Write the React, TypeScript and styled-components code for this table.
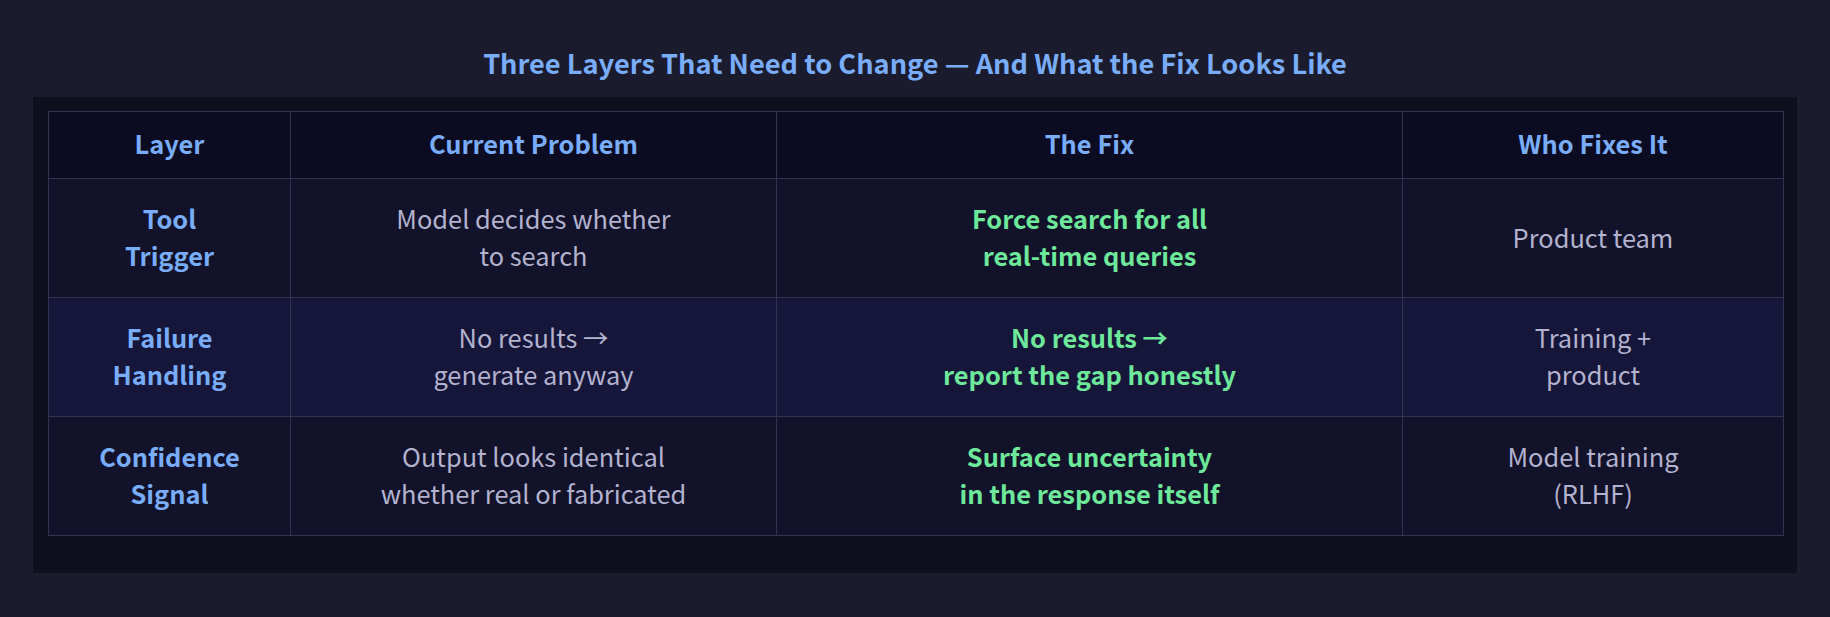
import React from "react";
import styled, { createGlobalStyle } from "styled-components";

type Row = {
  layer: string[];
  problem: string[];
  fix: string[];
  owner: string[];
  highlight?: boolean;
};

const rows: Row[] = [
  {
    layer: ["Tool", "Trigger"],
    problem: ["Model decides whether", "to search"],
    fix: ["Force search for all", "real-time queries"],
    owner: ["Product team"],
  },
  {
    layer: ["Failure", "Handling"],
    problem: ["No results →", "generate anyway"],
    fix: ["No results →", "report the gap honestly"],
    owner: ["Training +", "product"],
    highlight: true,
  },
  {
    layer: ["Confidence", "Signal"],
    problem: ["Output looks identical", "whether real or fabricated"],
    fix: ["Surface uncertainty", "in the response itself"],
    owner: ["Model training", "(RLHF)"],
  },
];

const Lines = ({ lines }: { lines: string[] }) => (
  <>
    {lines.map((line, i) => (
      <React.Fragment key={i}>
        {i > 0 && <br />}
        {line}
      </React.Fragment>
    ))}
  </>
);

const App: React.FC = () => {
  return (
    <>
      <GlobalStyle />
      <Page>
        <Title>Three Layers That Need to Change — And What the Fix Looks Like</Title>
        <Panel>
          <Table>
            <colgroup>
              <col style={{ width: 242 }} />
              <col style={{ width: 486 }} />
              <col style={{ width: 626 }} />
              <col style={{ width: 381 }} />
            </colgroup>
            <thead>
              <tr>
                <HeadCell>Layer</HeadCell>
                <HeadCell>Current Problem</HeadCell>
                <HeadCell>The Fix</HeadCell>
                <HeadCell>Who Fixes It</HeadCell>
              </tr>
            </thead>
            <tbody>
              {rows.map((row, i) => (
                <BodyRow key={i} $highlight={row.highlight}>
                  <Cell $tone="layer">
                    <Lines lines={row.layer} />
                  </Cell>
                  <Cell $tone="plain">
                    <Lines lines={row.problem} />
                  </Cell>
                  <Cell $tone="fix">
                    <Lines lines={row.fix} />
                  </Cell>
                  <Cell $tone="plain">
                    <Lines lines={row.owner} />
                  </Cell>
                </BodyRow>
              ))}
            </tbody>
          </Table>
        </Panel>
      </Page>
    </>
  );
};

export default App;

const GlobalStyle = createGlobalStyle`
  html, body {
    margin: 0;
    padding: 0;
    background: #1b1b2e;
  }
  body {
    font-family: "Noto Sans CJK SC", "Noto Sans", sans-serif;
  }
`;

const Page = styled.div`
  width: 1830px;
  height: 617px;
  box-sizing: border-box;
  padding: 0 33px;
  display: flex;
  flex-direction: column;
  background: #1b1b2e;
`;

const Title = styled.h1`
  margin: 0;
  height: 97px;
  padding-top: 44px;
  box-sizing: border-box;
  text-align: center;
  font-size: 27.2px;
  line-height: 36px;
  font-weight: 700;
  color: #79adf9;
`;

const Panel = styled.div`
  background: #0f0f1e;
  padding: 14px 14px 37px 15px;
`;

const Table = styled.table`
  width: 1735px;
  table-layout: fixed;
  border-collapse: collapse;
  font-size: 25.4px;
  line-height: 36.7px;
`;

const HeadCell = styled.th`
  background: #0b0b22;
  border: 1px solid #33334f;
  color: #79adf9;
  font-weight: 700;
  padding: 13px 10px 16px;
  height: 37px;
  text-align: center;
`;

const BodyRow = styled.tr<{ $highlight?: boolean }>`
  background: ${(p) => (p.$highlight ? "#16163a" : "#12122a")};
`;

const toneColor = {
  layer: "#79adf9",
  plain: "#b3b3cf",
  fix: "#6ee89a",
};

const Cell = styled.td<{ $tone: "layer" | "plain" | "fix" }>`
  border: 1px solid #33334f;
  padding: 21px 10px 23px;
  height: 74px;
  text-align: center;
  vertical-align: middle;
  color: ${(p) => toneColor[p.$tone]};
  font-weight: ${(p) => (p.$tone === "plain" ? 400 : 700)};
`;
